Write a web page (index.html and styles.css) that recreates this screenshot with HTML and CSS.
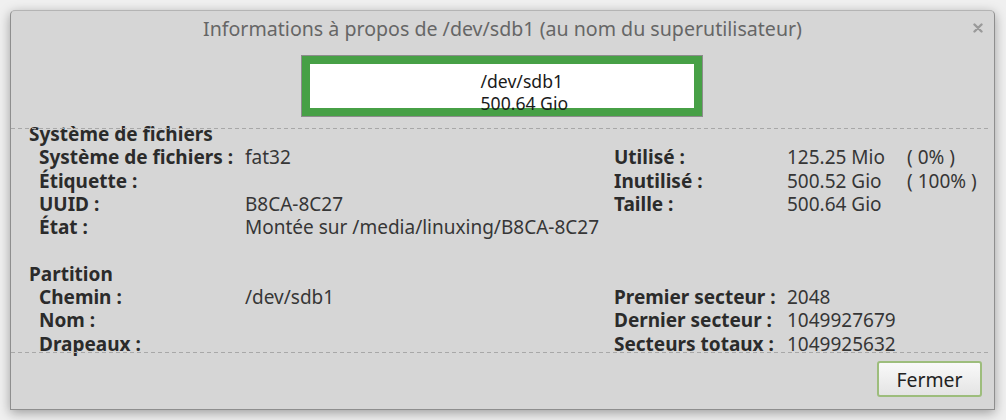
FILE: index.html
```html
<!DOCTYPE html>
<html lang="fr">
<head>
<meta charset="utf-8">
<title>Informations</title>
<link rel="stylesheet" href="styles.css">
</head>
<body>
<div class="window">
  <div class="titlebar">
    <span class="title">Informations à propos de /dev/sdb1 (au nom du superutilisateur)</span>
    <svg class="close" width="10" height="10" viewBox="0 0 10 10"><path d="M1.5 1.5 L8.5 8.5 M8.5 1.5 L1.5 8.5" stroke="#9a9a9a" stroke-width="2.4" stroke-linecap="round"/></svg>
  </div>
  <div class="summary">
    <div class="bar">
      <div class="bar-inner">
        <div>/dev/sdb1</div>
        <div>500.64 Gio</div>
      </div>
    </div>
  </div>
  <div class="dash"></div>
  <div class="scroll">
    <div class="grid">
      <div class="heading">Système de fichiers</div>
      <div class="lbl">Système de fichiers :</div><div class="val">fat32</div><div class="rlbl">Utilisé :</div><div class="val">125.25 Mio</div><div class="val">( 0% )</div>
      <div class="lbl">Étiquette :</div><div class="val"></div><div class="rlbl">Inutilisé :</div><div class="val">500.52 Gio</div><div class="val">( 100% )</div>
      <div class="lbl">UUID :</div><div class="val">B8CA-8C27</div><div class="rlbl">Taille :</div><div class="val">500.64 Gio</div><div class="val"></div>
      <div class="lbl">État :</div><div class="val">Montée sur /media/linuxing/B8CA-8C27</div><div></div><div></div><div></div>
      <div class="blank"></div>
      <div class="heading">Partition</div>
      <div class="lbl">Chemin :</div><div class="val">/dev/sdb1</div><div class="rlbl">Premier secteur :</div><div class="val">2048</div><div></div>
      <div class="lbl">Nom :</div><div class="val"></div><div class="rlbl">Dernier secteur :</div><div class="val">1049927679</div><div></div>
      <div class="lbl">Drapeaux :</div><div class="val"></div><div class="rlbl">Secteurs totaux :</div><div class="val">1049925632</div><div></div>
    </div>
  </div>
  <div class="dash"></div>
  <div class="actions">
    <button class="btn">Fermer</button>
  </div>
</div>
</body>
</html>
```

FILE: styles.css
```css
html, body {
  margin: 0;
  padding: 0;
}
body {
  width: 1006px;
  height: 420px;
  background: #f0f0f0;
  font-family: "Noto Sans", "DejaVu Sans", sans-serif;
  overflow: hidden;
}
.window {
  box-sizing: border-box;
  margin: 10px 0 0 10px;
  width: 985px;
  height: 400px;
  background: #d6d6d6;
  border: 1px solid #8e8e8e;
  border-top-color: #b4b4b4;
  border-radius: 5px 5px 0 0;
  box-shadow: 0 3px 12px rgba(0, 0, 0, 0.35);
  display: flex;
  flex-direction: column;
}
.titlebar {
  height: 34px;
  display: flex;
  align-items: center;
  justify-content: center;
  position: relative;
}
.title {
  font-size: 19.6px;
  color: #666666;
}
.close {
  position: absolute;
  right: 11px;
  top: 12px;
}
.summary {
  display: flex;
  justify-content: center;
  margin-top: 10px;
  padding-right: 2px;
}
.bar {
  border: 1px solid #8c8c8c;
  background: #47a046;
  padding: 8px;
}
.bar-inner {
  width: 384px;
  height: 44px;
  background: #ffffff;
  box-sizing: border-box;
  padding: 6px 0 0 171px;
  text-align: left;
  font-size: 17.6px;
  line-height: 22px;
  color: #1a1a1a;
}
.dash {
  height: 1px;
  margin: 0 6px 0 0;
  background: repeating-linear-gradient(to right, #a8a8a8 0 4px, transparent 4px 7px);
  position: relative;
}
.summary + .dash {
  margin-top: 11px;
}
.scroll {
  height: 223px;
}
.grid {
  margin-top: -6px;
  padding-left: 18px;
  display: grid;
  grid-template-columns: 216px 369px 173px 120px 1fr;
  grid-auto-rows: 23.3px;
  line-height: 23.3px;
  align-items: center;
  font-size: 19px;
  color: #363636;
}
.heading {
  grid-column: 1 / -1;
  font-weight: bold;
  color: #2b2b2b;
}
.blank {
  grid-column: 1 / -1;
}
.lbl {
  padding-left: 10px;
  font-weight: bold;
  color: #2b2b2b;
  white-space: nowrap;
}
.rlbl {
  font-weight: bold;
  color: #2b2b2b;
  white-space: nowrap;
}
.val {
  white-space: nowrap;
}
.actions {
  display: flex;
  justify-content: flex-end;
  padding: 8px 12px 0 0;
}
.btn {
  width: 105px;
  height: 36px;
  border: 2px solid #9dbd7c;
  border-radius: 3px;
  background: linear-gradient(#f9f9f9, #e4e4e4);
  font-family: "Noto Sans", "DejaVu Sans", sans-serif;
  font-size: 19.4px;
  color: #222222;
  padding: 0;
}
```
